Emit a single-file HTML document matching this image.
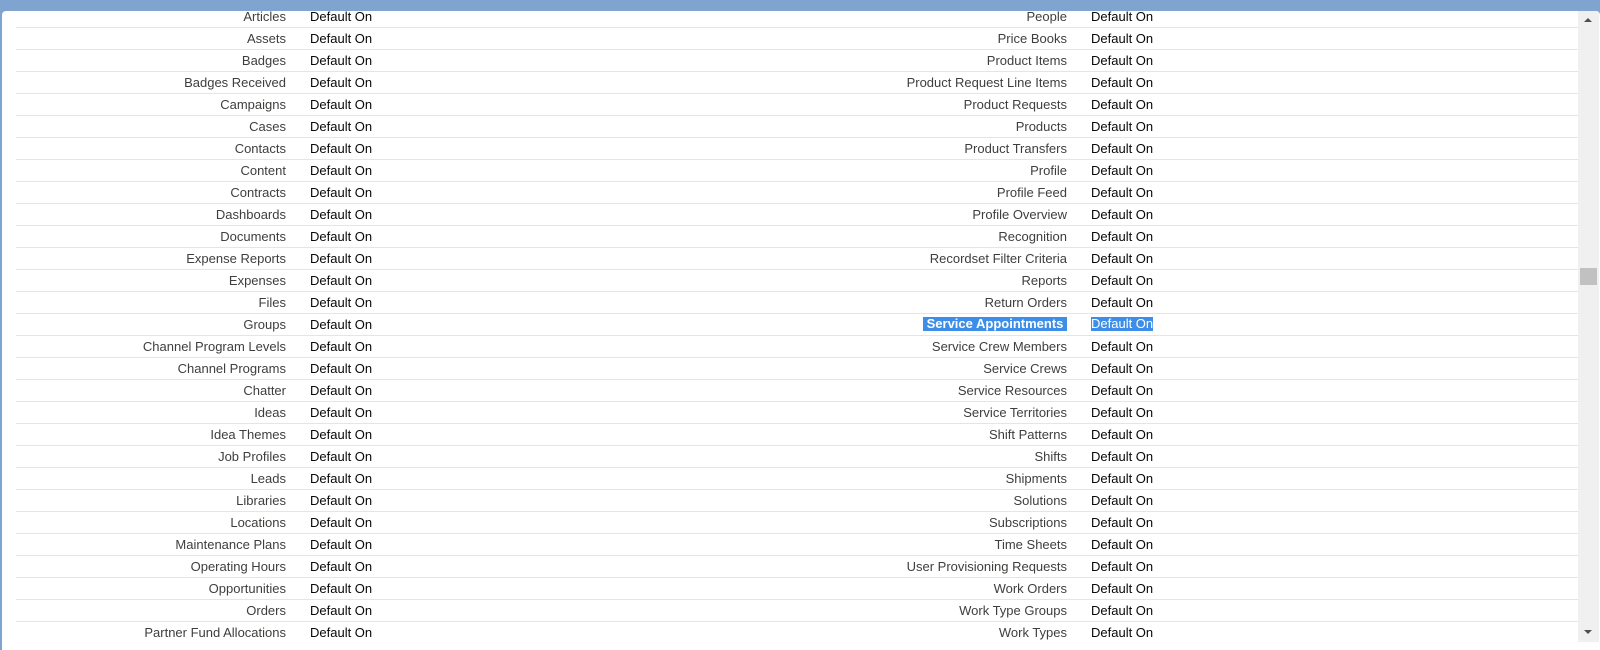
<!DOCTYPE html>
<html><head><style>
body{margin:0;width:1600px;height:650px;overflow:hidden;background:#7fa4cf;font-family:"Liberation Sans",Arial,sans-serif;font-size:13px;position:relative}
.panel{position:absolute;left:2px;top:11px;width:1598px;height:639px;background:#fff;border-radius:4px 4px 0 0;overflow:hidden}
.rows{position:absolute;left:14px;top:-5px;width:1562px}
.r{height:21px;border-bottom:1px solid #e5e5e5;position:relative;line-height:21px}
.r:last-child{border-bottom:none}
.l{position:absolute;right:1292px;color:#3e3e3c;text-align:right;white-space:nowrap}
.v{position:absolute;left:294px;color:#080707;white-space:nowrap}
.l2{position:absolute;right:511px;color:#3e3e3c;white-space:nowrap}
.v2{position:absolute;left:1075px;color:#080707;white-space:nowrap}
.sel{background:#3d8ee8;color:#fff;font-weight:bold}
.sb{position:absolute;left:1576px;top:0;width:21px;height:631px;background:#f0f0f0}
.th{position:absolute;left:2px;top:257px;width:17px;height:17px;background:#c1c1c1}
.up{position:absolute;left:6px;top:7px;width:0;height:0;border-left:4px solid transparent;border-right:4px solid transparent;border-bottom:4px solid #505050}
.dn{position:absolute;left:6px;top:619px;width:0;height:0;border-left:4px solid transparent;border-right:4px solid transparent;border-top:4px solid #505050}
</style></head><body>
<div class="panel">
<div class="rows">
<div class="r"><span class="l">Articles</span><span class="v">Default On</span><span class="l2">People</span><span class="v2">Default On</span></div>
<div class="r"><span class="l">Assets</span><span class="v">Default On</span><span class="l2">Price Books</span><span class="v2">Default On</span></div>
<div class="r"><span class="l">Badges</span><span class="v">Default On</span><span class="l2">Product Items</span><span class="v2">Default On</span></div>
<div class="r"><span class="l">Badges Received</span><span class="v">Default On</span><span class="l2">Product Request Line Items</span><span class="v2">Default On</span></div>
<div class="r"><span class="l">Campaigns</span><span class="v">Default On</span><span class="l2">Product Requests</span><span class="v2">Default On</span></div>
<div class="r"><span class="l">Cases</span><span class="v">Default On</span><span class="l2">Products</span><span class="v2">Default On</span></div>
<div class="r"><span class="l">Contacts</span><span class="v">Default On</span><span class="l2">Product Transfers</span><span class="v2">Default On</span></div>
<div class="r"><span class="l">Content</span><span class="v">Default On</span><span class="l2">Profile</span><span class="v2">Default On</span></div>
<div class="r"><span class="l">Contracts</span><span class="v">Default On</span><span class="l2">Profile Feed</span><span class="v2">Default On</span></div>
<div class="r"><span class="l">Dashboards</span><span class="v">Default On</span><span class="l2">Profile Overview</span><span class="v2">Default On</span></div>
<div class="r"><span class="l">Documents</span><span class="v">Default On</span><span class="l2">Recognition</span><span class="v2">Default On</span></div>
<div class="r"><span class="l">Expense Reports</span><span class="v">Default On</span><span class="l2">Recordset Filter Criteria</span><span class="v2">Default On</span></div>
<div class="r"><span class="l">Expenses</span><span class="v">Default On</span><span class="l2">Reports</span><span class="v2">Default On</span></div>
<div class="r"><span class="l">Files</span><span class="v">Default On</span><span class="l2">Return Orders</span><span class="v2">Default On</span></div>
<div class="r"><span class="l">Groups</span><span class="v">Default On</span><span class="l2 sel" style="line-height:14px;top:3px">&nbsp;Service Appointments&nbsp;</span><span class="v2 sel" style="line-height:14px;top:3px;font-weight:normal">Default On</span></div>
<div class="r"><span class="l">Channel Program Levels</span><span class="v">Default On</span><span class="l2">Service Crew Members</span><span class="v2">Default On</span></div>
<div class="r"><span class="l">Channel Programs</span><span class="v">Default On</span><span class="l2">Service Crews</span><span class="v2">Default On</span></div>
<div class="r"><span class="l">Chatter</span><span class="v">Default On</span><span class="l2">Service Resources</span><span class="v2">Default On</span></div>
<div class="r"><span class="l">Ideas</span><span class="v">Default On</span><span class="l2">Service Territories</span><span class="v2">Default On</span></div>
<div class="r"><span class="l">Idea Themes</span><span class="v">Default On</span><span class="l2">Shift Patterns</span><span class="v2">Default On</span></div>
<div class="r"><span class="l">Job Profiles</span><span class="v">Default On</span><span class="l2">Shifts</span><span class="v2">Default On</span></div>
<div class="r"><span class="l">Leads</span><span class="v">Default On</span><span class="l2">Shipments</span><span class="v2">Default On</span></div>
<div class="r"><span class="l">Libraries</span><span class="v">Default On</span><span class="l2">Solutions</span><span class="v2">Default On</span></div>
<div class="r"><span class="l">Locations</span><span class="v">Default On</span><span class="l2">Subscriptions</span><span class="v2">Default On</span></div>
<div class="r"><span class="l">Maintenance Plans</span><span class="v">Default On</span><span class="l2">Time Sheets</span><span class="v2">Default On</span></div>
<div class="r"><span class="l">Operating Hours</span><span class="v">Default On</span><span class="l2">User Provisioning Requests</span><span class="v2">Default On</span></div>
<div class="r"><span class="l">Opportunities</span><span class="v">Default On</span><span class="l2">Work Orders</span><span class="v2">Default On</span></div>
<div class="r"><span class="l">Orders</span><span class="v">Default On</span><span class="l2">Work Type Groups</span><span class="v2">Default On</span></div>
<div class="r"><span class="l">Partner Fund Allocations</span><span class="v">Default On</span><span class="l2">Work Types</span><span class="v2">Default On</span></div>
</div>
<div class="sb"><div class="up"></div><div class="th"></div><div class="dn"></div></div>
</div>
</body></html>
